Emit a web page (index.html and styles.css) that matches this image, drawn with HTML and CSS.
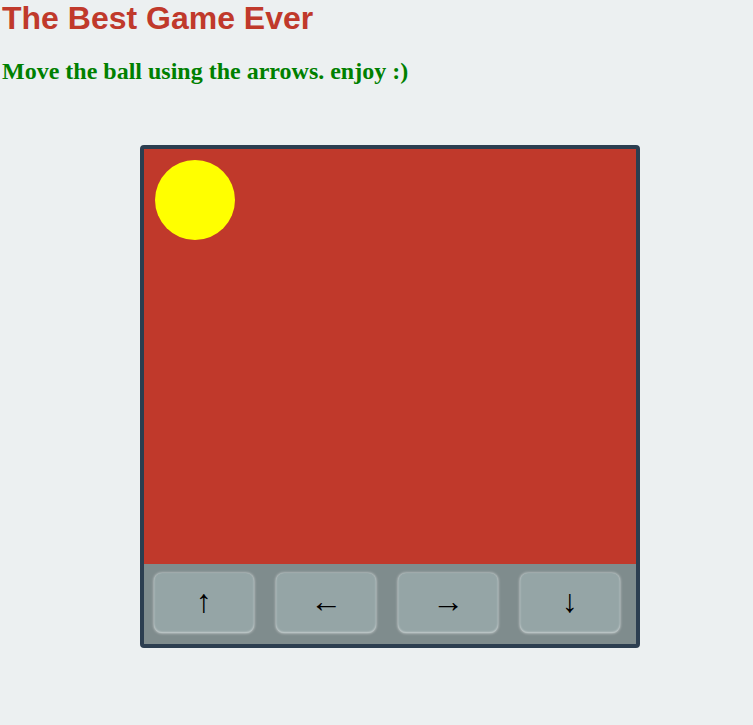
FILE: index.html
```html
<!DOCTYPE html>
<html>
<head>
<meta charset="utf-8">
<title>The Best Game Ever</title>
<link rel="stylesheet" href="styles.css">
</head>
<body>
<h1 class="title">The Best Game Ever</h1>
<h2 class="subtitle">Move the ball using the arrows. enjoy :)</h2>
<div class="game">
  <div class="field">
    <div class="ball"></div>
  </div>
  <div class="controls">
    <button class="btn">↑</button>
    <button class="btn">←</button>
    <button class="btn">→</button>
    <button class="btn">↓</button>
  </div>
</div>
</body>
</html>
```
FILE: styles.css
```css
html, body {
  margin: 0;
  padding: 0;
  background: #ecf0f1;
}
body {
  padding-left: 2px;
}
.title {
  margin: 0 0 21px;
  font-family: "Liberation Sans", Arial, sans-serif;
  font-weight: bold;
  font-size: 32px;
  color: #c0392b;
}
.subtitle {
  margin: 0;
  font-family: "Liberation Serif", "Times New Roman", serif;
  font-weight: bold;
  font-size: 24px;
  color: #008000;
}
.game {
  margin: 60px 0 0 138px;
  width: 492px;
  border: 4px solid #2c3e50;
  border-radius: 4px;
  background: #7f8c8d;
}
.field {
  height: 415px;
  background: #c0392b;
  padding: 11px;
  box-sizing: border-box;
}
.ball {
  width: 80px;
  height: 80px;
  border-radius: 50%;
  background: #ffff00;
}
.controls {
  display: flex;
  gap: 22px;
  padding: 9px 10px 10px;
  height: 80px;
  box-sizing: border-box;
}
.btn {
  width: 100px;
  height: 60px;
  border: none;
  border-radius: 8px;
  background: #95a5a6;
  box-shadow: 0 0 3px rgba(255,255,255,0.75), inset 0 -1px 2px rgba(255,255,255,0.45);
  font-family: "Liberation Serif", "Times New Roman", serif;
  font-size: 32px;
  color: #000;
  padding: 0 0 4px;
  cursor: pointer;
}
```
